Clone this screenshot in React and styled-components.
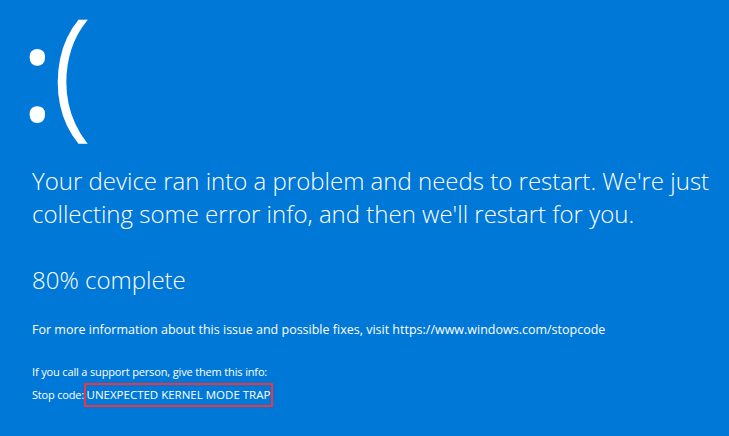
import React from "react";
import styled, { createGlobalStyle } from "styled-components";

const GlobalStyle = createGlobalStyle`
  html, body {
    margin: 0;
    padding: 0;
    background: #0078d7;
  }
  body {
    font-family: "Open Sans", "Noto Sans", sans-serif;
    color: #ffffff;
  }
`;

const Screen = styled.div`
  width: 729px;
  height: 436px;
  background: #0078d7;
  padding-left: 32px;
  box-sizing: border-box;
  overflow: hidden;
`;

const Face = styled.div`
  display: flex;
  align-items: baseline;
  box-sizing: border-box;
  height: 146px;
  padding-top: 17px;
  line-height: 100px;
`;

const Colon = styled.span`
  font-size: 132px;
  font-weight: 400;
  margin-left: -12px;
`;

const Paren = styled.span`
  font-size: 140px;
  font-weight: 300;
  -webkit-text-stroke: 1.5px #ffffff;
  margin-left: -2px;
`;

const Headline = styled.p`
  margin: 18px 0 0;
  width: 690px;
  font-size: 24px;
  line-height: 33px;
  font-weight: 300;
`;

const Progress = styled.p`
  margin: 33px 0 0;
  font-size: 24px;
  line-height: 33px;
  font-weight: 300;
`;

const Small = styled.p`
  margin: ${(p) => p.$top || 0}px 0 0;
  font-size: ${(p) => p.$size || 12}px;
  letter-spacing: ${(p) => p.$track || 0}px;
  line-height: 22px;
  white-space: nowrap;
`;

const StopCode = styled.span`
  display: inline-block;
  margin-left: -3px;
  border: 2px solid #f0353f;
  padding: 0 1px;
  font-size: 11.5px;
  letter-spacing: 0;
  line-height: 20px;
`;

export default function App() {
  return (
    <>
      <GlobalStyle />
      <Screen>
        <Face>
          <Colon>:</Colon>
          <Paren>(</Paren>
        </Face>
        <Headline>
          Your device ran into a problem and needs to restart. We're just
          collecting some error info, and then we'll restart for you.
        </Headline>
        <Progress>80% complete</Progress>
        <Small $top={23} $size={12.5}>
          For more information about this issue and possible fixes, visit
          https://www.windows.com/stopcode
        </Small>
        <Small $top={20} $size={11} $track={-0.15}>
          If you call a support person, give them this info:
        </Small>
        <Small $size={11} $track={-0.2}>
          Stop code: <StopCode>UNEXPECTED KERNEL MODE TRAP</StopCode>
        </Small>
      </Screen>
    </>
  );
}
